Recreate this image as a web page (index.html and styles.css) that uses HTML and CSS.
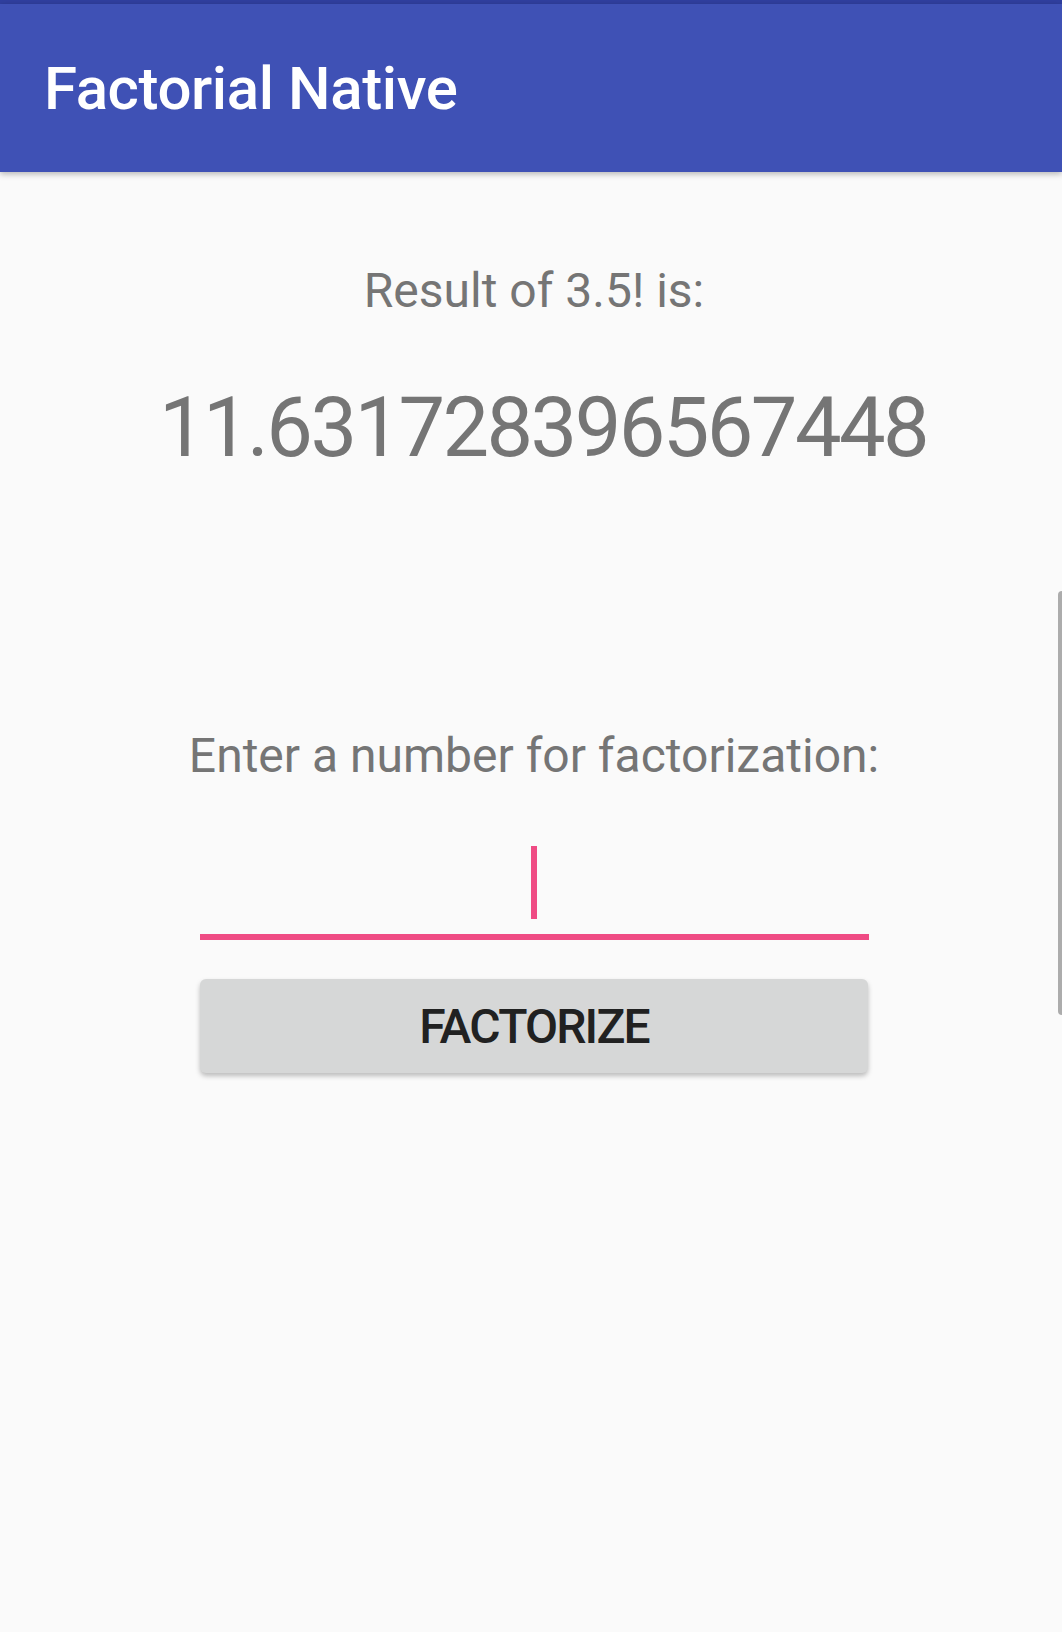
FILE: index.html
```html
<!DOCTYPE html>
<html>
<head>
<meta charset="utf-8">
<link rel="stylesheet" href="styles.css">
</head>
<body>
<div class="status-strip"></div>
<header class="app-bar"><h1 class="app-title">Factorial Native</h1></header>
<main class="content">
  <p class="label result-label">Result of 3.5! is:</p>
  <p class="result-value">11.631728396567448</p>
  <p class="label enter-label">Enter a number for factorization:</p>
  <div class="input-field"><span class="cursor"></span></div>
  <button class="factorize-btn">FACTORIZE</button>
</main>
<div class="edge-handle"></div>
</body>
</html>
```

FILE: styles.css
```css
html, body {
  margin: 0;
  padding: 0;
}
body {
  background: #fafafa;
  width: 1062px;
  height: 1632px;
  overflow: hidden;
  position: relative;
  font-family: Roboto, "Noto Sans", sans-serif;
}
.status-strip {
  height: 4px;
  background: #303f9f;
}
.app-bar {
  height: 168px;
  background: #3f51b5;
  display: flex;
  align-items: center;
  padding-left: 44px;
  box-shadow: 0 2px 6px rgba(0,0,0,0.28);
  position: relative;
  z-index: 1;
}
.app-title {
  margin: 0;
  color: #ffffff;
  font-weight: 500;
  font-size: 60px;
  line-height: 70px;
  letter-spacing: -0.4px;
  margin-top: 2px;
}
.content {
  display: flex;
  flex-direction: column;
  align-items: center;
  padding-left: 6px;
}
.label {
  margin: 0;
  color: #757575;
  font-size: 48px;
  line-height: 56px;
}
.result-label {
  margin-top: 91px;
}
.result-value {
  margin: 60px 0 0 18px;
  color: #757575;
  font-size: 83px;
  line-height: 97px;
  letter-spacing: -2.6px;
}
.enter-label {
  margin-top: 252px;
}
.input-field {
  margin-top: 62px;
  width: 669px;
  height: 88px;
  border-bottom: 6px solid #ef4b84;
  display: flex;
  justify-content: center;
  align-items: flex-start;
}
.cursor {
  display: block;
  width: 6px;
  height: 73px;
  background: #ef4b84;
}
.factorize-btn {
  margin-top: 39px;
  width: 668px;
  height: 94px;
  border: none;
  border-radius: 6px;
  background: #d6d7d7;
  box-shadow: 0 3px 5px rgba(0,0,0,0.25);
  font-family: Roboto, "Noto Sans", sans-serif;
  font-weight: 500;
  font-size: 48px;
  letter-spacing: -1.8px;
  color: #212121;
  padding: 0;
}
.edge-handle {
  position: absolute;
  right: 0;
  top: 591px;
  width: 4px;
  height: 424px;
  background: #acacac;
  border-radius: 6px 0 0 6px;
}
```
